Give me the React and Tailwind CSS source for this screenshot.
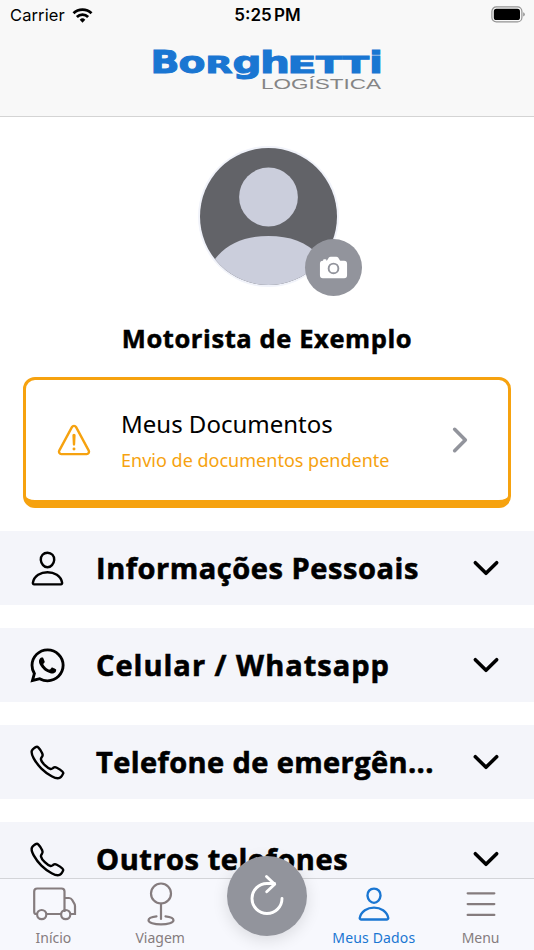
import React from "react";
import {
  IoCallOutline,
  IoCamera,
  IoChevronDown,
  IoChevronForward,
  IoLogoWhatsapp,
  IoPersonOutline,
  IoWarningOutline,
} from "react-icons/io5";

function StatusBar() {
  return (
    <div className="grid h-[30px] grid-cols-3 items-center pr-[9px] pl-[10px] font-['Inter',sans-serif] text-[17px] leading-none text-black">
      <div className="flex items-center gap-[7px]">
        <span className="text-[16.5px] tracking-[0.1px]">Carrier</span>
        <svg width="21" height="15" viewBox="0 0 22 16" fill="none" stroke="#000" strokeWidth="3">
          <path d="M1.4 5.6a13.8 13.8 0 0 1 19.2 0" />
          <path d="M5 9.6a8.6 8.6 0 0 1 12 0" />
          <path d="M8 12.4a4.3 4.3 0 0 1 6 0L11 15.6Z" fill="#000" stroke="none" />
        </svg>
      </div>
      <div className="text-center font-semibold whitespace-nowrap [word-spacing:-2px]">5:25 PM</div>
      <div className="flex justify-end">
        <svg width="34" height="18" viewBox="0 0 34 18">
          <rect x="0.9" y="0.9" width="30" height="15" rx="4.5" fill="none" stroke="#929292" strokeWidth="1.2" />
          <rect x="2.8" y="2.8" width="26.2" height="11.2" rx="2.6" fill="#000" />
          <path d="M32.2 6.2q1.6.6 1.6 2.2t-1.6 2.2Z" fill="#929292" />
        </svg>
      </div>
    </div>
  );
}

const WORDMARK = [
  { ch: "B", x: -0.5, size: 31.5, w: 29 },
  { ch: "o", x: 27.5, size: 30, w: 27 },
  { ch: "R", x: 54.5, size: 22.5, w: 27 },
  { ch: "g", x: 81.5, size: 30, w: 29 },
  { ch: "h", x: 109, size: 30, w: 30 },
  { ch: "E", x: 136.5, size: 22.5, w: 29 },
  { ch: "T", x: 165, size: 22.5, w: 26 },
  { ch: "T", x: 192, size: 22.5, w: 26 },
  { ch: "i", x: 218, size: 30, w: 14 },
];

function Logo() {
  return (
    <svg width="232" height="46" viewBox="0 0 232 46" className="overflow-visible">
      <g fill="#1a76d2" stroke="#1a76d2" strokeWidth="1" fontFamily="DejaVu Sans, sans-serif" fontWeight="700">
        {WORDMARK.map((l, i) => (
          <text key={i} x={l.x} y="25.6" fontSize={l.size} textLength={l.w} lengthAdjust="spacingAndGlyphs">
            {l.ch}
          </text>
        ))}
      </g>
      <text x="110" y="41.6" fontFamily="Liberation Sans, sans-serif" fontSize="15" fill="#858585" textLength="120" lengthAdjust="spacingAndGlyphs">
        LOGÍSTICA
      </text>
    </svg>
  );
}

function Avatar() {
  return (
    <div className="relative mt-[29px] h-[141px] w-[141px]">
      <svg width="141" height="141" viewBox="0 0 141 141">
        <defs>
          <clipPath id="face">
            <circle cx="70.5" cy="70.5" r="68.5" />
          </clipPath>
        </defs>
        <circle cx="70.5" cy="70.5" r="70.5" fill="#f1f3fa" />
        <g clipPath="url(#face)">
          <rect width="141" height="141" fill="#626368" />
          <circle cx="70.5" cy="51" r="29.4" fill="#cbcedc" />
          <path d="M11 122C24 99 44 90 70.500 90S117 99 130 122V141H11Z" fill="#cbcedc" />
        </g>
      </svg>
      <div className="absolute top-[93px] left-[107px] flex h-[57px] w-[57px] items-center justify-center rounded-full bg-[#92949c]">
        <IoCamera className="h-[31px] w-[31px] text-white" />
      </div>
    </div>
  );
}

function DocumentsCard() {
  return (
    <div className="mx-[23px] mt-[21px] flex h-[131px] shrink-0 items-center rounded-[12px] border-[3px] border-b-[8px] border-[#f6a20f] pr-[29px] pl-[29px]">
      <IoWarningOutline className="h-[38px] w-[38px] shrink-0 text-[#f6a20f]" />
      <div className="ml-[28px] flex-1 pt-[4px] font-['Noto_Sans',sans-serif] whitespace-nowrap">
        <div className="text-[24px] leading-[36px] text-black">Meus Documentos</div>
        <div className="text-[18px] leading-[36px] tracking-[0.01px] text-[#f6a20f]">Envio de documentos pendente</div>
      </div>
      <IoChevronForward className="h-[38px] w-[38px] shrink-0 text-[#92949c]" />
    </div>
  );
}

function Section({ icon: Icon, title, spacing }) {
  return (
    <div className="flex h-[74px] shrink-0 items-center bg-[#f4f5fa] pr-[29px] pl-[28px] text-black">
      <Icon className="h-[39px] w-[39px] shrink-0" />
      <div className={`ml-[29px] flex-1 font-['Open_Sans',sans-serif] text-[29px] leading-[40px] font-bold whitespace-nowrap [-webkit-text-stroke:0.6px_#000] ${spacing}`}>
        {title}
      </div>
      <IoChevronDown className="mb-[1px] h-[38px] w-[38px] shrink-0" />
    </div>
  );
}

function TruckIcon() {
  return (
    <svg width="44" height="36" viewBox="0 0 44 36" fill="none" stroke="#857c7e" strokeWidth="2.200" className="mt-[1px] ml-[3px]">
      <path d="M4.500 28H3.200Q1.200 28 1.200 26V5.500Q1.200 2.500 4.200 2.500H28.500Q31.500 2.500 31.500 5.500V26M13 28H28M31.500 12H36Q38 12 39.200 14L41.500 18Q42 19 42 20V28H37.500" />
      <circle cx="8.700" cy="28.600" r="4.600" />
      <circle cx="32.700" cy="28.600" r="4.600" />
    </svg>
  );
}

function PinIcon() {
  return (
    <svg width="28" height="44" viewBox="0 0 28 44" fill="none" stroke="#857c7e" strokeWidth="2.200" strokeLinecap="round" className="ml-[2px]">
      <circle cx="14" cy="11.500" r="10" />
      <path d="M14 21.500V37M9.500 34.400C4.500 35 1.500 36.500 1.500 38.200c0 2.400 5.600 4.200 12.500 4.200s12.500-1.800 12.500-4.200c0-1.700-3-3.200-8-3.800" />
    </svg>
  );
}

function MenuIcon() {
  return (
    <svg width="30" height="26" viewBox="0 0 30 26" fill="none" stroke="#857c7e" strokeWidth="2.300" strokeLinecap="round" className="ml-[1px]">
      <path d="M1.700 2.300H28.300M1.700 13.100H28.300M1.700 23.900H28.300" />
    </svg>
  );
}

function RefreshIcon() {
  return (
    <svg width="40" height="44" viewBox="0 0 40 44" fill="none" stroke="#fff" strokeWidth="2.900" strokeLinecap="round" strokeLinejoin="round">
      <path d="M35 24.500A15 15 0 1 1 20 9.500H27.500" />
      <path d="M19.500 2.500L27.700 10.300L19.700 17.800" />
    </svg>
  );
}

function Tab({ label, active, children }) {
  return (
    <div className={`flex flex-1 flex-col items-center font-['Noto_Sans',sans-serif] text-[14px] ${active ? "text-[#1a76d2]" : "text-[#857c7e]"}`}>
      <div className="flex h-[49px] items-center justify-center">{children}</div>
      <div className={`leading-[20px] whitespace-nowrap ${active ? "tracking-[0.15px]" : ""}`}>{label}</div>
    </div>
  );
}

export default function App() {
  return (
    <div className="flex h-[950px] w-[534px] flex-col overflow-hidden bg-white">
      <header className="flex h-[117px] shrink-0 flex-col border-b border-[#d4d4d4] bg-[#f8f8f8]">
        <StatusBar />
        <div className="mt-[17px] flex justify-center">
          <Logo />
        </div>
      </header>
      <main className="flex h-[761px] shrink-0 flex-col overflow-hidden">
        <div className="flex shrink-0 flex-col items-center pl-[3px]">
          <Avatar />
        </div>
        <h1 className="mt-[33px] shrink-0 text-center font-['Open_Sans',sans-serif] text-[25.500px] leading-[36px] font-bold tracking-[0.6px] text-black [-webkit-text-stroke:0.5px_#000]">
          Motorista de Exemplo
        </h1>
        <DocumentsCard />
        <div className="mt-[23px] flex shrink-0 flex-col gap-[23px]">
          <Section icon={IoPersonOutline} title="Informações Pessoais" spacing="tracking-[0.55px]" />
          <Section icon={IoLogoWhatsapp} title="Celular / Whatsapp" spacing="tracking-[1px]" />
          <Section icon={IoCallOutline} title="Telefone de emergên..." spacing="tracking-[0.4px]" />
          <Section icon={IoCallOutline} title="Outros telefones" spacing="tracking-[0.55px]" />
        </div>
      </main>
      <nav className="relative flex h-[72px] shrink-0 border-t border-[#d3d4d8] bg-[#f7f8fd]">
        <Tab label="Início"><TruckIcon /></Tab>
        <Tab label="Viagem"><PinIcon /></Tab>
        <div className="flex-1" />
        <Tab label="Meus Dados" active><IoPersonOutline className="h-[38px] w-[38px]" /></Tab>
        <Tab label="Menu"><MenuIcon /></Tab>
        <div className="absolute top-[-23px] left-[227px] flex h-[80px] w-[80px] items-center justify-center rounded-full bg-[#92949c] shadow-[0_4px_16px_rgba(0,0,0,0.12)]">
          <RefreshIcon />
        </div>
      </nav>
    </div>
  );
}
